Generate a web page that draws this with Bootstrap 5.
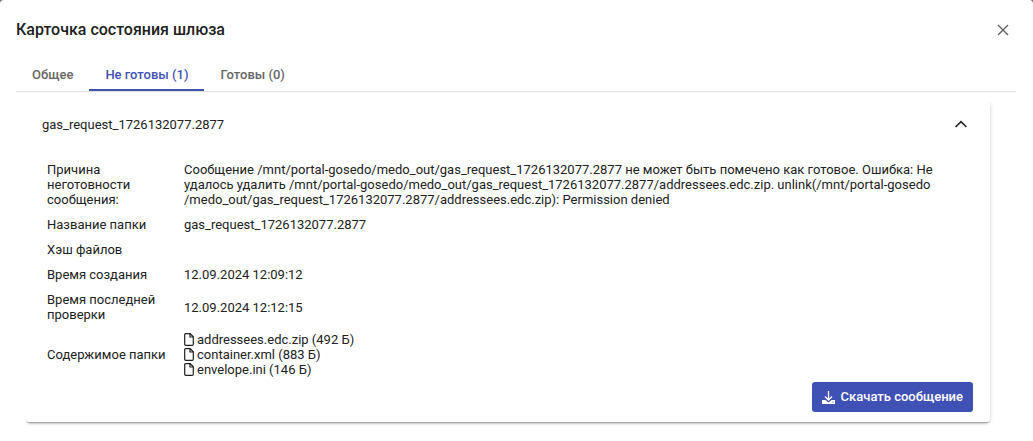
<!DOCTYPE html>
<html lang="ru">
<head>
<meta charset="utf-8">
<meta name="viewport" content="width=device-width, initial-scale=1">
<title>Карточка состояния шлюза</title>
<link href="https://cdn.jsdelivr.net/npm/bootstrap@5.3.0/dist/css/bootstrap.min.css" rel="stylesheet">
<style>
body{font:13px/15px Roboto,sans-serif;color:#212121;background:#757575}
.dialog{min-height:100vh;padding:16px 17px 0 16px;background:#fff;border-radius:4px 4px 0 0}
.dialog-title{font-size:16px;line-height:28px;font-weight:500}
.close-btn{width:26px;height:26px;color:#616161}
.tabs{margin-top:14px;border-bottom:1px solid #e0e0e0}
.tabs .nav-link{padding:8px 16px 5px;line-height:18px;font-weight:500;color:#666;background:none;border:0;border-bottom:2px solid transparent;border-radius:0}
.tabs .nav-link.active{color:#3f51b5;border-color:#3f51b5}
.scroll-area{margin:10px 0 0 10px;padding:0 26px 18px 0;overflow:hidden}
.panel{border-radius:4px;box-shadow:0 3px 1px -2px rgba(0,0,0,.2),0 2px 2px 0 rgba(0,0,0,.14),0 1px 5px 0 rgba(0,0,0,.12)}
.panel-head{height:44px;padding:0 23px 0 16px;color:inherit;background:none;border:0}
.panel-content{padding:11px 17px 10px 16px}
.info th,.info td{padding:5px;font-weight:400;vertical-align:middle}
.info th{width:137px}
.file-icon{width:10px;height:13px;margin-right:3px}
.download{height:30px;gap:6px;background:#3f51b5;color:#fff;font-size:13px;line-height:18px;font-weight:500;padding:0 10px;border:0;border-radius:3px}
.download:hover{background:#303f9f;color:#fff}
</style>
</head>
<body>
<svg class="d-none" aria-hidden="true"><symbol id="file" viewBox="0 0 10 13"><path d="M1.5.7h4.700l3.100 3.100v7.500a1 1 0 0 1-1 1H1.700a1 1 0 0 1-1-1V1.500a.8.8 0 0 1 .8-.8zM6 .8V4h3.200" fill="none" stroke="currentColor" stroke-width="1.2"/></symbol></svg>
<div class="dialog" role="dialog" aria-labelledby="title">
<header class="d-flex justify-content-between align-items-center">
<h1 class="dialog-title mb-0" id="title">Карточка состояния шлюза</h1>
<button type="button" class="close-btn btn p-0 border-0 d-flex align-items-center justify-content-center" aria-label="Закрыть"><svg width="12" height="12" viewBox="0 0 12 12" fill="none" stroke="currentColor" stroke-width="1.4"><path d="M1 1l10 10M11 1L1 11"/></svg></button>
</header>
<ul class="tabs nav" role="tablist">
<li class="nav-item"><button type="button" class="nav-link" role="tab">Общее</button></li>
<li class="nav-item"><button type="button" class="nav-link active" role="tab" aria-selected="true">Не готовы (1)</button></li>
<li class="nav-item"><button type="button" class="nav-link" role="tab">Готовы (0)</button></li>
</ul>
<main class="scroll-area">
<section class="panel">
<button type="button" class="panel-head w-100 d-flex align-items-center justify-content-between" data-bs-toggle="collapse" data-bs-target="#details" aria-expanded="true" aria-controls="details">
<span>gas_request_1726132077.2877</span>
<svg width="12" height="8" viewBox="0 0 12 8" fill="none" stroke="currentColor" stroke-width="1.6"><path d="M.6 7L6 1.600 11.400 7"/></svg>
</button>
<div class="collapse show" id="details">
<div class="panel-content">
<table class="info w-100">
<tbody>
<tr><th scope="row">Причина неготовности сообщения:</th><td>Сообщение /mnt/portal-gosedo/medo_out/gas_request_1726132077.2877 не может быть помечено как готовое. Ошибка: Не удалось удалить /mnt/portal-gosedo/medo_out/gas_request_1726132077.2877/addressees.edc.zip. unlink(/mnt/portal-gosedo<span class="d-inline-block">/medo_out/gas_request_1726132077.2877/addressees.edc.zip):</span> Permission denied</td></tr>
<tr><th scope="row">Название папки</th><td>gas_request_1726132077.2877</td></tr>
<tr><th scope="row">Хэш файлов</th><td></td></tr>
<tr><th scope="row">Время создания</th><td>12.09.2024 12:09:12</td></tr>
<tr><th scope="row">Время последней проверки</th><td>12.09.2024 12:12:15</td></tr>
<tr><th scope="row">Содержимое папки</th><td><ul class="list-unstyled mb-0">
<li class="d-flex align-items-center"><svg class="file-icon"><use href="#file"/></svg>addressees.edc.zip (492 Б)</li>
<li class="d-flex align-items-center"><svg class="file-icon"><use href="#file"/></svg>container.xml (883 Б)</li>
<li class="d-flex align-items-center"><svg class="file-icon"><use href="#file"/></svg>envelope.ini (146 Б)</li>
</ul></td></tr>
</tbody>
</table>
<div class="d-flex justify-content-end">
<button type="button" class="download btn d-flex align-items-center"><svg width="13" height="13" viewBox="0 0 13 13"><path d="M0 9h3.500l3 2.500 3-2.500H13v4H0z" fill="currentColor"/><path d="M6.500 0v9M3 5.500L6.500 9 10 5.500" fill="none" stroke="currentColor" stroke-width="1.300"/><path d="M10.500 11h1" stroke="#3f51b5"/></svg>Скачать сообщение</button>
</div>
</div>
</div>
</section>
</main>
</div>
<script src="https://cdn.jsdelivr.net/npm/bootstrap@5.3.0/dist/js/bootstrap.bundle.min.js"></script>
</body>
</html>
